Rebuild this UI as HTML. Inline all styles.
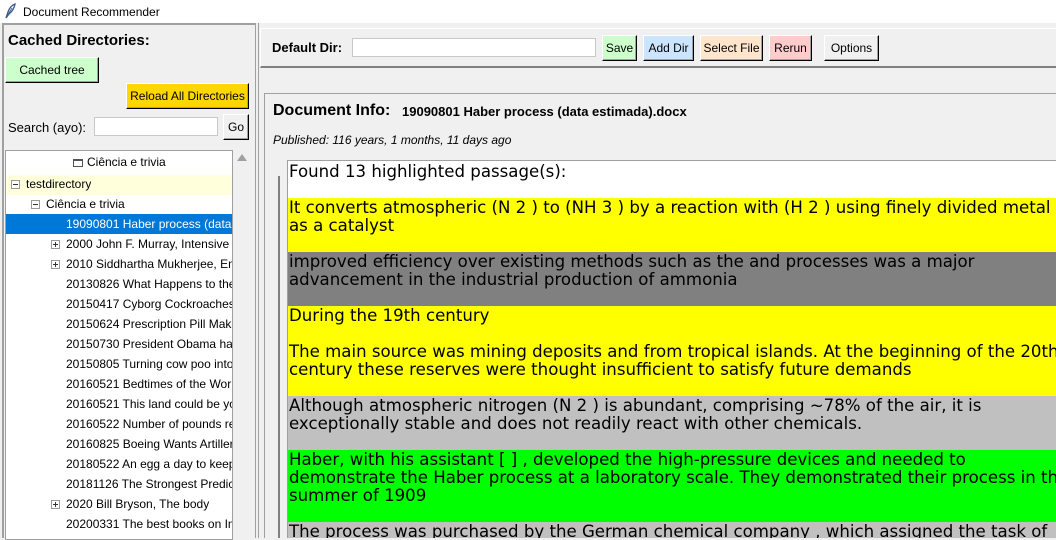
<!DOCTYPE html>
<html><head><meta charset="utf-8"><style>
*{box-sizing:border-box;margin:0;padding:0}
body{width:1056px;height:538px;overflow:hidden;background:#f0f0f0;font-family:"Liberation Sans",sans-serif;font-size:12px;color:#000;position:relative}
.abs{position:absolute}
.btn{position:absolute;border:1px solid #000;border-top-color:#fff;border-left-color:#fff;box-shadow:inset -1px -1px 0 #a0a0a0;text-align:center;line-height:24px;font-family:"Liberation Sans",sans-serif;font-size:12px;white-space:nowrap}
.row{position:absolute;height:20px;line-height:20px;font-family:"Liberation Sans",sans-serif;font-size:12px;white-space:nowrap;overflow:hidden}
.pm{position:absolute;width:9px;height:9px;border:1px solid #999;top:6px;background:#fff}
.pm:before{content:"";position:absolute;left:1px;top:3px;width:5px;height:1px;background:#333}
.pl:after{content:"";position:absolute;left:3px;top:1px;width:1px;height:5px;background:#333}
.tx{position:absolute;left:288px;width:768px;font-family:"DejaVu Sans",sans-serif;font-size:16.6px;line-height:18px;padding-left:1px;padding-top:1px;white-space:nowrap;overflow:hidden;color:#000}
</style></head><body>
<div class="abs" style="left:0;top:0;width:1056px;height:23px;background:#fff"></div>
<svg class="abs" style="left:4px;top:3px" width="12" height="16" viewBox="0 0 12 16"><path d="M2 15 L4 9 Q6 3 11 1 Q10 7 5 11 Z" fill="none" stroke="#3a5a8a" stroke-width="1.3"/><path d="M2 15 L8 5" stroke="#3a5a8a" stroke-width="0.8"/></svg>
<div class="abs" style="left:23px;top:5px;font-size:12px">Document Recommender</div>
<div class="abs" style="left:2px;top:23px;width:254px;height:515px;border-top:2px solid #a0a0a0;border-left:2px solid #a0a0a0;border-right:1px solid #a0a0a0"></div>
<div class="abs" style="left:8px;top:32px;font-weight:bold;font-size:15px">Cached Directories:</div>
<div class="btn" style="left:5px;top:57px;width:94px;height:26px;background:#ccffcc">Cached tree</div>
<div class="btn" style="left:126px;top:83px;width:123px;height:26px;background:#ffd700">Reload All Directories</div>
<div class="abs" style="left:8px;top:120px;font-size:13px">Search (ayo):</div>
<div class="abs" style="left:94px;top:117px;width:124px;height:19px;background:#fff;border:1px solid #c8c8c8"></div>
<div class="btn" style="left:223px;top:114px;width:26px;height:26px;background:#f0f0f0;line-height:24px">Go</div>
<div class="abs" style="left:5px;top:150px;width:228px;height:390px;background:#fff;border:1px solid #a0a0a0"></div>
<div class="abs" style="left:237px;top:154px;width:0;height:0;border-left:5px solid transparent;border-right:5px solid transparent;border-bottom:7px solid #a0a0a0"></div>
<div class="abs" style="left:73px;top:159px;width:10px;height:8px;border:1px solid #555;border-top-width:2px"></div>
<div class="row" style="left:87px;top:152px">Ciência e trivia</div>
<div class="abs" style="left:6px;top:175px;width:226px;height:20px;background:#ffffdc"></div>
<div class="pm" style="left:11px;top:180px"></div><div class="row" style="left:26px;top:174px">testdirectory</div>
<div class="pm" style="left:31px;top:200px"></div><div class="row" style="left:46px;top:194px">Ciência e trivia</div>
<div class="abs" style="left:6px;top:214px;width:226px;height:20px;background:#0078d7"></div>
<div class="row" style="left:66px;top:214px;width:166px;color:#fff">19090801 Haber process (data estimada).docx</div>
<div class="pm pl" style="left:51px;top:240px"></div><div class="row" style="left:66px;top:234px;width:166px">2000 John F. Murray, Intensive Care</div>
<div class="pm pl" style="left:51px;top:260px"></div><div class="row" style="left:66px;top:254px;width:166px">2010 Siddhartha Mukherjee, Emperor</div>
<div class="row" style="left:66px;top:274px;width:166px">20130826 What Happens to the</div>
<div class="row" style="left:66px;top:294px;width:166px">20150417 Cyborg Cockroaches</div>
<div class="row" style="left:66px;top:314px;width:166px">20150624 Prescription Pill Makers</div>
<div class="row" style="left:66px;top:334px;width:166px">20150730 President Obama has</div>
<div class="row" style="left:66px;top:354px;width:166px">20150805 Turning cow poo into</div>
<div class="row" style="left:66px;top:374px;width:166px">20160521 Bedtimes of the World</div>
<div class="row" style="left:66px;top:394px;width:166px">20160521 This land could be yours</div>
<div class="row" style="left:66px;top:414px;width:166px">20160522 Number of pounds re</div>
<div class="row" style="left:66px;top:434px;width:166px">20160825 Boeing Wants Artillery</div>
<div class="row" style="left:66px;top:454px;width:166px">20180522 An egg a day to keep</div>
<div class="row" style="left:66px;top:474px;width:166px">20181126 The Strongest Predictor</div>
<div class="pm pl" style="left:51px;top:500px"></div><div class="row" style="left:66px;top:494px;width:166px">2020 Bill Bryson, The body</div>
<div class="row" style="left:66px;top:514px;width:166px">20200331 The best books on Im</div>

<div class="abs" style="left:258px;top:23px;width:798px;height:515px;border-left:1px solid #a0a0a0"></div>
<div class="abs" style="left:260px;top:28px;width:796px;height:40px;border-top:1px solid #fff;border-left:1px solid #fff;border-bottom:2px solid #808080"></div>
<div class="abs" style="left:272px;top:40px;font-weight:bold;font-size:13px">Default Dir:</div>
<div class="abs" style="left:352px;top:38px;width:244px;height:19px;background:#fff;border:1px solid #c8c8c8"></div>
<div class="btn" style="left:602px;top:35px;width:35px;height:26px;background:#ccffcc">Save</div>
<div class="btn" style="left:643px;top:35px;width:51px;height:26px;background:#cce5ff">Add Dir</div>
<div class="btn" style="left:700px;top:35px;width:63px;height:26px;background:#ffe5cc">Select File</div>
<div class="btn" style="left:769px;top:35px;width:43px;height:26px;background:#ffcccc">Rerun</div>
<div class="btn" style="left:824px;top:35px;width:55px;height:26px;background:#f0f0f0">Options</div>
<div class="abs" style="left:264px;top:93px;width:792px;height:445px;border-top:1px solid #a0a0a0;border-left:1px solid #a0a0a0"></div>
<div class="abs" style="left:273px;top:102px;font-weight:bold;font-size:16px">Document Info:</div>
<div class="abs" style="left:402px;top:104px;font-weight:bold;font-size:13px">19090801 Haber process (data estimada).docx</div>
<div class="abs" style="left:273px;top:133px;font-style:italic;font-size:12px">Published: 116 years, 1 months, 11 days ago</div>
<div class="abs" style="left:278px;top:176px;width:2px;height:362px;background:#808080"></div>
<div class="abs" style="left:287px;top:160px;width:769px;height:378px;background:#fff;border-left:1px solid #a0a0a0;border-top:1px solid #a0a0a0"></div>
<div class="tx" style="top:162px;height:36px">Found 13 highlighted passage(s):</div>
<div class="tx" style="top:198px;height:54px;background:#ffff00">It converts atmospheric (N 2 ) to (NH 3 ) by a reaction with (H 2 ) using finely divided metal<br>as a catalyst</div>
<div class="tx" style="top:252px;height:54px;background:#808080">improved efficiency over existing methods such as the and processes was a major<br>advancement in the industrial production of ammonia</div>
<div class="tx" style="top:306px;height:90px;background:#ffff00">During the 19th century<br><br>The main source was mining deposits and from tropical islands. At the beginning of the 20th<br>century these reserves were thought insufficient to satisfy future demands</div>
<div class="tx" style="top:396px;height:54px;background:#c0c0c0">Although atmospheric nitrogen (N 2 ) is abundant, comprising ~78% of the air, it is<br>exceptionally stable and does not readily react with other chemicals.</div>
<div class="tx" style="top:450px;height:72px;background:#00ff00">Haber, with his assistant [ ] , developed the high-pressure devices and needed to<br>demonstrate the Haber process at a laboratory scale. They demonstrated their process in the<br>summer of 1909</div>
<div class="tx" style="top:522px;height:16px;background:#c0c0c0">The process was purchased by the German chemical company , which assigned the task of</div>
</body></html>
